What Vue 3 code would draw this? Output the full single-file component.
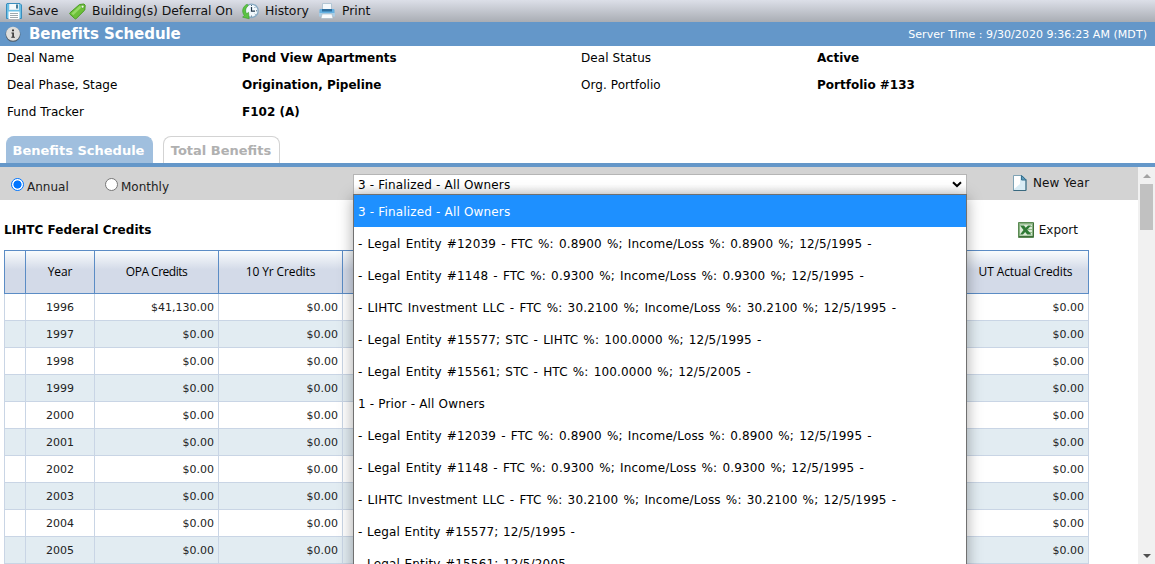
<template>
  <div class="page">
    <header class="toolbar">
      <button class="tool save">
        <svg class="icon" width="16" height="16" viewBox="0 0 16 16">
          <path d="M1 .5h13l1.500 1.500v13.500H.5V1z" fill="#6cc0e6" stroke="#3a8dbd" />
          <path d="M3 1h10v6H3z" fill="#dcebf2" />
          <path d="M4 1h6v5H4z" fill="#f6fafc" />
          <path d="M10 1.500h2v4h-2z" fill="#4b7d99" />
          <path d="M2.500 8.500h11V16h-11z" fill="#fff" />
          <path d="M4 10.500h8M4 12.500h8M4 14.500h8" stroke="#9fa9ae" />
        </svg>
        <span>Save</span>
      </button>
      <button class="tool deferral">
        <svg class="icon" width="17" height="17" viewBox="0 0 17 17">
          <path d="M10.500 1.500 15 1l1.200 1.200-.4 4.800-8.600 8.600q-.7.700-1.400 0L1 11.200q-.7-.7 0-1.400z" fill="#6cc038" stroke="#4a9a25" stroke-linejoin="round" />
          <path d="M10.600 2.700 2.400 10.600l1.800 1.700 9-8.600z" fill="#96da64" />
          <circle cx="13.600" cy="3.700" r="1.400" fill="#f4fbe9" stroke="#4a9a25" stroke-width=".6" />
        </svg>
        <span>Building(s) Deferral On</span>
      </button>
      <button class="tool history">
        <svg class="icon" width="17" height="17" viewBox="0 0 17 17">
          <circle cx="9.500" cy="7.800" r="6.700" fill="#f1f8fc" stroke="#86a9c2" stroke-width="1.300" />
          <path d="M9.500 4v4.200h3.500" fill="none" stroke="#233a4d" stroke-width="1.200" />
          <path d="M9.500 2v1M15.200 7.800h-1.200M13.500 3.900l-.7.700M13.500 11.700l-.7-.7M9.500 13.600v-1" stroke="#47667e" />
          <path d="M5.200 1.200C.2 3.500-.5 9 2.300 12.400L.6 14.200l6.600 1.600-.7-6.500-1.800 1.500C3 8.500 3.300 4.800 6.300 2.800z" fill="#5cc443" stroke="#37992a" stroke-width=".6" />
        </svg>
        <span>History</span>
      </button>
      <button class="tool print">
        <svg class="icon" width="16" height="16" viewBox="0 0 16 16">
          <path d="M3.500.5h9V8h-9z" fill="#f4f9fc" stroke="#b3c6d4" />
          <path d="M1.500 6h13q1 0 1 1v5H.5V7q0-1 1-1z" fill="#64b1e2" />
          <path d="M3 6h10v2.500H3z" fill="#2f6f9f" />
          <path d="M0 10h16v3.500H0z" fill="#a9cde5" />
          <path d="M3 11h10l1 4.500H2z" fill="#f8fbfd" stroke="#a3b4c0" stroke-width=".6" />
        </svg>
        <span>Print</span>
      </button>
    </header>

    <div class="title-bar">
      <svg class="info" width="16" height="16" viewBox="0 0 16 16">
        <circle cx="8" cy="8.400" r="7.400" fill="#4f5b66" />
        <circle cx="8" cy="7.700" r="7" fill="#dededc" />
        <path d="M6.400 6.500h2.500v4.300h1v1H6.300v-1h1V7.500h-.9zM7 3.500h2v1.800H7z" fill="#333" />
      </svg>
      <h1>Benefits Schedule</h1>
      <span class="server-time">Server Time : 9/30/2020 9:36:23 AM (MDT)</span>
    </div>

    <dl class="details">
      <template v-for="d in details" :key="d.label">
        <dt>{{ d.label }}</dt>
        <dd>{{ d.value }}</dd>
      </template>
    </dl>

    <nav class="tabs">
      <a class="tab active">Benefits Schedule</a>
      <a class="tab">Total Benefits</a>
    </nav>

    <div class="body">
      <main class="content">
        <div class="filters">
          <label class="radio annual" @click="period = 'annual'">
            <i :class="['dot', { checked: period === 'annual' }]"></i><span>Annual</span>
          </label>
          <label class="radio monthly" @click="period = 'monthly'">
            <i :class="['dot', { checked: period === 'monthly' }]"></i><span>Monthly</span>
          </label>
          <div class="select">
            <div class="select-box" @click="open = !open">
              <span>{{ options[selected].text }}</span>
              <svg width="10" height="7" viewBox="0 0 10 7">
                <path d="M1 1.200 5 5l4-3.800" fill="none" stroke="#000" stroke-width="2" />
              </svg>
            </div>
            <ul v-if="open" class="options">
              <li
                v-for="(option, i) in options"
                :key="i"
                :class="[option.kind, { selected: i === selected }]"
                @click="choose(i)"
              >{{ option.text }}</li>
            </ul>
          </div>
          <button class="tool new-year">
            <svg class="icon" width="14" height="16" viewBox="0 0 14 16">
              <path d="M.5.500h8.500L13 4.500v11H.5z" fill="#d9ecf5" stroke="#7fa3b5" />
              <path d="M1 1h6v8l-6 5z" fill="#fff" />
              <path d="M13 4.500v11H.5" fill="none" stroke="#39697f" />
              <path d="M8.500.500V5H13z" fill="#5d9bbd" stroke="#37718f" />
            </svg>
            <span>New Year</span>
          </button>
        </div>

        <div class="section-head">
          <h2>LIHTC Federal Credits</h2>
          <button class="tool export">
            <svg class="icon" width="16" height="16" viewBox="0 0 16 16">
              <path d="M.5.500h15v15H.5z" fill="#86b07e" stroke="#5b8a54" />
              <path d="M2 2.500h12v11H2z" fill="#dcebd8" />
              <path d="M10 4.500h4M10 7.500h4M10 10.500h4" stroke="#8fb987" />
              <path d="M2 3.500h4l1.700 2.300L10 3.500h3L9.300 7.700 13.500 12.500H9.200L7.200 10 5 12.500H2L5.500 8z" fill="#2f7a35" />
              <path d="M1 14.500h14.500V1" fill="none" stroke="#3f6f3b" />
            </svg>
            <span>Export</span>
          </button>
        </div>

        <table class="grid">
          <colgroup>
            <col class="c-mark" />
            <col class="c-year" />
            <col class="c-amount" />
            <col class="c-amount" />
            <col />
            <col class="c-last" />
          </colgroup>
          <thead>
            <tr>
              <th></th>
              <th>Year</th>
              <th class="tight">OPA Credits</th>
              <th>10 Yr Credits</th>
              <th></th>
              <th>UT Actual Credits</th>
            </tr>
          </thead>
          <tbody>
            <tr v-for="row in rows" :key="row.year">
              <td></td>
              <td class="year">{{ row.year }}</td>
              <td>{{ row.opa }}</td>
              <td>{{ row.tenYear }}</td>
              <td></td>
              <td>{{ row.actual }}</td>
            </tr>
          </tbody>
        </table>
      </main>

      <aside class="scrollbar">
        <i class="arrow up"></i>
        <i class="thumb"></i>
        <i class="arrow down"></i>
      </aside>
    </div>
  </div>
</template>

<script setup>
import { ref } from 'vue'

const period = ref('annual')
const open = ref(true)
const selected = ref(0)

const details = [
  { label: 'Deal Name', value: 'Pond View Apartments' },
  { label: 'Deal Status', value: 'Active' },
  { label: 'Deal Phase, Stage', value: 'Origination, Pipeline' },
  { label: 'Org. Portfolio', value: 'Portfolio #133' },
  { label: 'Fund Tracker', value: 'F102 (A)' }
]

const options = [
  { kind: 'group', text: '3 - Finalized - All Owners' },
  { kind: 'share', text: '- Legal Entity #12039 - FTC %: 0.8900 %; Income/Loss %: 0.8900 %; 12/5/1995 -' },
  { kind: 'share', text: '- Legal Entity #1148 - FTC %: 0.9300 %; Income/Loss %: 0.9300 %; 12/5/1995 -' },
  { kind: 'share', text: '- LIHTC Investment LLC - FTC %: 30.2100 %; Income/Loss %: 30.2100 %; 12/5/1995 -' },
  { kind: 'share', text: '- Legal Entity #15577; STC - LIHTC %: 100.0000 %; 12/5/1995 -' },
  { kind: 'share', text: '- Legal Entity #15561; STC - HTC %: 100.0000 %; 12/5/2005 -' },
  { kind: 'group', text: '1 - Prior - All Owners' },
  { kind: 'share', text: '- Legal Entity #12039 - FTC %: 0.8900 %; Income/Loss %: 0.8900 %; 12/5/1995 -' },
  { kind: 'share', text: '- Legal Entity #1148 - FTC %: 0.9300 %; Income/Loss %: 0.9300 %; 12/5/1995 -' },
  { kind: 'share', text: '- LIHTC Investment LLC - FTC %: 30.2100 %; Income/Loss %: 30.2100 %; 12/5/1995 -' },
  { kind: 'entity', text: '- Legal Entity #15577; 12/5/1995 -' },
  { kind: 'entity', text: '- Legal Entity #15561; 12/5/2005' }
]

const rows = Array.from({ length: 10 }, (_, i) => ({
  year: 1996 + i,
  opa: i === 0 ? '$41,130.00' : '$0.00',
  tenYear: '$0.00',
  actual: '$0.00'
}))

function choose(i) {
  selected.value = i
  open.value = false
}
</script>

<style>
body {
  background: #fff;
  overflow: hidden;
}
</style>

<style scoped>
.page {
  display: flex;
  flex-direction: column;
  height: 564px;
  overflow: hidden;
  font-family: Verdana, 'DejaVu Sans', sans-serif;
  font-size: 12px;
  color: #000;
}

.page * {
  box-sizing: border-box;
}

/* toolbar */
.toolbar {
  display: flex;
  align-items: center;
  flex: none;
  height: 22px;
  padding-left: 6px;
  background: linear-gradient(#dcdfe8, #a9adb4);
}

.tool {
  display: flex;
  align-items: center;
  gap: 6px;
  padding: 0;
  border: 0;
  background: none;
  font: inherit;
  font-size: 12.4px;
  line-height: 20px;
  letter-spacing: -0.05px;
  color: #111;
  white-space: nowrap;
}

.icon {
  flex: none;
  display: block;
}

.save {
  width: 63px;
}

.deferral {
  width: 173px;
}

.history {
  width: 77px;
}

.print {
  gap: 7px;
}

/* title */
.title-bar {
  display: flex;
  align-items: center;
  flex: none;
  height: 24px;
  padding: 0 8px 0 5px;
  background: #6497c9;
  color: #fff;
}

h1 {
  margin: 0 auto 0 8px;
  font-size: 15px;
  line-height: 24px;
  letter-spacing: -0.06px;
}

.server-time {
  font-size: 11px;
  letter-spacing: 0.05px;
}

/* deal details */
.details {
  display: grid;
  grid-template-columns: 235px 339px 236px 1fr;
  grid-auto-rows: 27px;
  flex: none;
  height: 90px;
  margin: 0;
  padding: 0 0 0 7px;
  line-height: 24px;
}

.details dt {
  letter-spacing: 0.07px;
}

.details dd {
  margin: 0;
  font-weight: bold;
}

/* tabs */
.tabs {
  display: flex;
  gap: 10px;
  flex: none;
  height: 31px;
  padding-left: 6px;
  border-bottom: 4px solid #6497c9;
}

.tab {
  width: 117px;
  height: 27px;
  padding-right: 1px;
  border: 1px solid #d3d3d3;
  border-bottom: 0;
  border-radius: 8px 8px 0 0;
  font-size: 13px;
  font-weight: bold;
  line-height: 27px;
  text-align: center;
  color: #b0b0b0;
  white-space: nowrap;
}

.tab.active {
  width: 147px;
  padding-right: 2px;
  border-color: #a0bfde;
  background: #a0bfde;
  color: #fff;
}

.body {
  display: flex;
  flex: 1;
  min-height: 0;
}

.content {
  width: 1138px;
}

/* filter row */
.filters {
  display: flex;
  height: 33px;
  padding-left: 11px;
  background: #d3d3d3;
}

.radio {
  display: flex;
  padding-top: 11px;
  gap: 3px;
  color: #222;
}

.radio span {
  padding-top: 1px;
  line-height: 16px;
}

.annual {
  width: 94px;
}

.monthly {
  width: 248px;
}

.dot {
  width: 13px;
  height: 13px;
  border: 1px solid #767676;
  border-radius: 50%;
  background: #fff;
}

.dot.checked {
  border: 1px solid #0075ff;
  background: radial-gradient(circle, #0075ff 3.7px, #fff 4.4px);
}

.select {
  position: relative;
  width: 614px;
  height: 20px;
  margin-top: 7px;
}

.select-box {
  display: flex;
  align-items: center;
  justify-content: space-between;
  height: 21px;
  padding: 0 4px;
  border: 1px solid #b5b5b5;
  background: linear-gradient(#fff 50%, #eee);
  letter-spacing: 0.17px;
}

.options {
  position: absolute;
  z-index: 2;
  top: 20px;
  left: 0;
  width: 614px;
  margin: 0;
  padding: 0;
  list-style: none;
  border: 1px solid #707070;
  background: #fff;
  box-shadow: 0 3px 14px rgba(0, 0, 0, 0.35);
}

.options li {
  height: 32px;
  padding-left: 4px;
  line-height: 34px;
  letter-spacing: 0.17px;
  white-space: nowrap;
}

.options .share {
  word-spacing: 1.1px;
}

.options .entity {
  word-spacing: 0.5px;
}

.options li.selected {
  background: #1e90ff;
  color: #fff;
}

.new-year {
  height: 20px;
  margin: 6px 0 0 46px;
  font-size: 12px;
  letter-spacing: 0.1px;
}

/* section heading */
.section-head {
  display: flex;
  align-items: center;
  justify-content: space-between;
  height: 50px;
  padding: 10px 60px 0 4px;
}

h2 {
  margin: 0;
  font-size: 12px;
  letter-spacing: 0.04px;
}

.export {
  gap: 5px;
  font-size: 12px;
  letter-spacing: 0;
}

/* credits table */
.grid {
  width: 1085px;
  margin-left: 4px;
  table-layout: fixed;
  border-collapse: separate;
  border-spacing: 0;
}

.c-mark {
  width: 22px;
}

.c-year {
  width: 69px;
}

.c-amount {
  width: 124px;
}

.c-last {
  width: 126px;
}

th {
  height: 44px;
  padding: 0 0 1px;
  border: 1px solid #5b8cc5;
  border-left: 0;
  background: linear-gradient(#f9fcfd, #d3dae8 45%);
  font-family: 'Trebuchet MS', 'Open Sans', sans-serif;
  font-size: 12px;
  font-weight: normal;
  letter-spacing: -0.12px;
}

th.tight {
  letter-spacing: -0.5px;
}

th:first-child {
  border-left: 1px solid #5b8cc5;
}

td {
  height: 27px;
  padding: 0 4px;
  border-right: 1px solid #c9d5e5;
  border-bottom: 1px solid #c9d5e5;
  font-size: 11px;
  text-align: right;
  color: #222;
}

td:first-child {
  border-left: 1px solid #c9d5e5;
}

td.year {
  text-align: center;
}

tbody tr:nth-child(even) {
  background: #e2ecf2;
}

/* scrollbar */
.scrollbar {
  display: flex;
  flex-direction: column;
  align-items: center;
  width: 17px;
  background: #f1f1f1;
}

.arrow {
  border: 4px solid transparent;
}

.arrow.up {
  margin-top: 3px;
  border-bottom: 4px solid #a3a3a3;
}

.thumb {
  width: 13px;
  height: 46px;
  margin-top: 6px;
  background: #c1c1c1;
}

.arrow.down {
  margin-top: auto;
  margin-bottom: 2px;
  border-top: 4px solid #505050;
}
</style>
